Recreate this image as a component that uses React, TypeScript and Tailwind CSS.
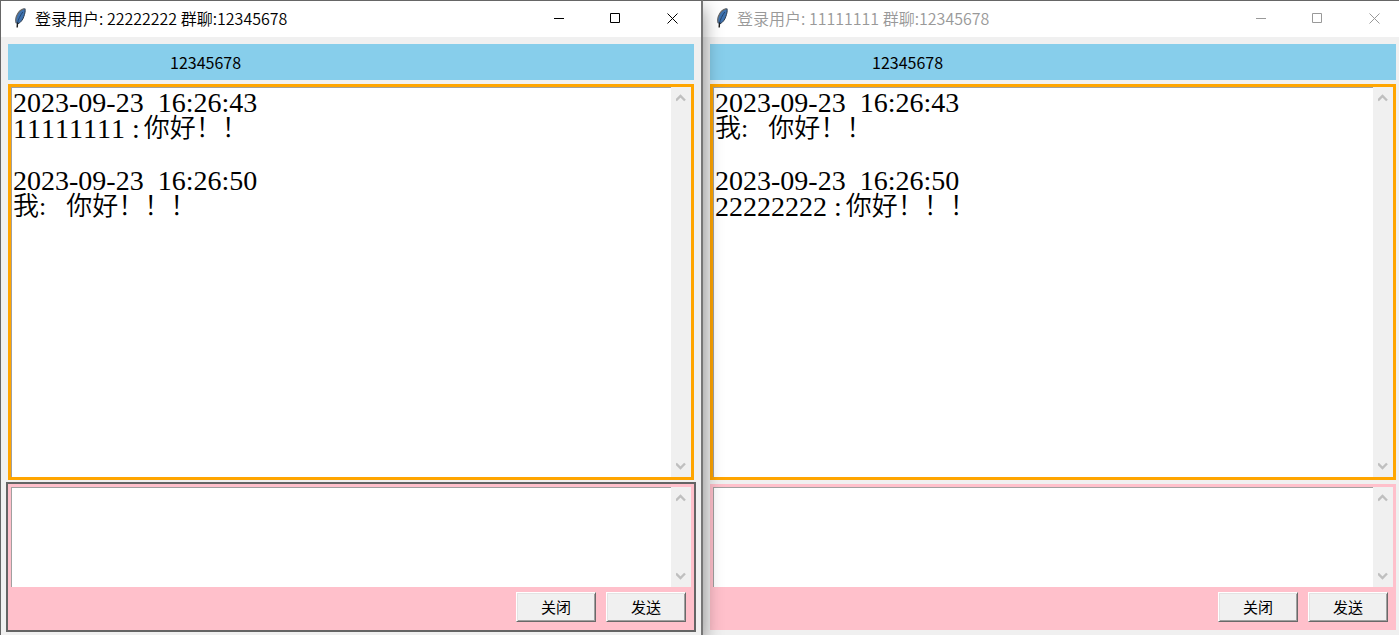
import clsx from "clsx";

interface Message {
  date: string;
  time: string;
  sender: string;
  text: string;
}

interface ChatWindowProps {
  user: string;
  group: string;
  messages: Message[];
  active?: boolean;
}

function FeatherIcon() {
  return (
    <svg viewBox="0 0 16 22" className="h-[22px] w-4" aria-hidden="true">
      <path
        d="M13 1.500C9.200 2 5.500 5.500 4 10c-.7 2.300-.7 4.500 0 6.200l1.600.9c3-1.300 5.200-4.300 6.300-7.600C13 6.500 13.600 4 13 1.500z"
        fill="#3f73b0"
      />
      <path
        d="M12.500 1.600C9 2.300 5.600 5.800 4.200 10c-.7 2.200-.7 4.300-.1 6"
        fill="none"
        stroke="#6b6a68"
        strokeWidth="1.2"
      />
      <path
        d="M13 1.600c.5 2.500-.1 5-1.200 8-1 3.200-3.100 6-6 7.300"
        fill="none"
        stroke="#2c3b4d"
        strokeWidth="1"
      />
      <path d="M10.800 5C8.200 8.500 6.200 12.500 5.600 16" fill="none" stroke="#24456e" strokeWidth="1" />
      <path d="M5.500 15.500L5.200 20.500" fill="none" stroke="#1f1f1f" strokeWidth="1.4" />
    </svg>
  );
}

function WindowControls() {
  const button = "flex w-[57px] items-center justify-center";
  return (
    <div className="flex self-stretch">
      <button aria-label="最小化" className={button}>
        <svg viewBox="0 0 11 11" className="size-[11px]" stroke="currentColor">
          <path d="M1 5.500h10" />
        </svg>
      </button>
      <button aria-label="最大化" className={button}>
        <svg viewBox="0 0 11 11" className="size-[11px]" stroke="currentColor" fill="none">
          <path d="M.5.5h9v9h-9z" />
        </svg>
      </button>
      <button aria-label="关闭窗口" className={button}>
        <svg viewBox="0 0 11 11" className="size-[11px]" stroke="currentColor">
          <path d="M.5.5l10 10M10.500.5l-10 10" />
        </svg>
      </button>
    </div>
  );
}

function ScrollBar() {
  const button = "flex size-5 items-center justify-center text-[#bfbfbf]";
  return (
    <div className="flex w-5 flex-col justify-between bg-[#f0f0f0] py-px">
      <button aria-label="向上滚动" className={button}>
        <svg viewBox="0 0 10 8" className="h-2 w-[10px]" fill="none" stroke="currentColor" strokeWidth="2.4">
          <path d="M0 6.500L4.500 2 9 6.500" />
        </svg>
      </button>
      <button aria-label="向下滚动" className={button}>
        <svg viewBox="0 0 10 8" className="h-2 w-[10px]" fill="none" stroke="currentColor" strokeWidth="2.4">
          <path d="M0 1.500L4.500 6 9 1.500" />
        </svg>
      </button>
    </div>
  );
}

function PushButton({ label }: { label: string }) {
  return (
    <button className="h-[30px] w-20 border border-t-white border-l-white border-r-[#696969] border-b-[#696969] bg-[#f0f0f0] text-[15px] leading-5 text-black shadow-[inset_1px_1px_0_#e3e3e3,inset_-1px_-1px_0_#a0a0a0]">
      {label}
    </button>
  );
}

function MessageRow({ message }: { message: Message }) {
  const mine = message.sender === "我";
  return (
    <li>
      <div className="flex gap-3.5 text-[28px] leading-[26px]">
        <span>{message.date}</span>
        <span>{message.time}</span>
      </div>
      <div className="flex text-[26px] leading-[26px]">
        {mine ? (
          <span className="mr-5">我:</span>
        ) : (
          <span className="mr-1 text-[28px]">{message.sender} :</span>
        )}
        <span>{message.text}</span>
      </div>
    </li>
  );
}

function ChatWindow({ user, group, messages, active }: ChatWindowProps) {
  return (
    <section
      className={clsx(
        "flex flex-1 flex-col border-t border-t-[#666666] bg-[#f0f0f0]",
        active
          ? "relative z-10 border-r-2 border-l border-r-[#777777] border-l-[#666666] shadow-[0_8px_18px_rgba(0,0,0,0.45)]"
          : "-mr-1",
      )}
    >
      <header
        className={clsx(
          "flex h-9 items-center bg-white pb-0.5 pl-[11px]",
          active ? "text-black" : "text-[#999999]",
        )}
      >
        <FeatherIcon />
        <h1 className="ml-[7px] flex-1 text-base leading-6 font-[350]">
          登录用户: {user} 群聊:{group}
        </h1>
        <WindowControls />
      </header>

      <div className="flex flex-1 flex-col gap-1 px-[7px] pt-[7px] pb-[5px]">
        <div className="h-9 bg-[#87ceeb] pl-[162px] text-base leading-9">{group}</div>

        <div className="flex flex-1 border-3 border-[#ffa500]">
          <ul className="flex flex-1 flex-col gap-[26px] border-t border-l border-[#a0a0a0] bg-white pt-[2px] pl-px font-['Liberation_Serif','Noto_Sans_CJK_SC',serif] font-[350] [font-kerning:none]">
            {messages.map((m) => (
              <MessageRow key={m.time} message={m} />
            ))}
          </ul>
          <ScrollBar />
        </div>

        <form
          className={clsx("bg-[#ffc0cb] p-[3px]", active && "ring-2 ring-[#646464]")}
          onSubmit={(e) => e.preventDefault()}
        >
          <div className="flex h-[100px]">
            <textarea
              aria-label="消息"
              className="flex-1 resize-none border-t border-l border-[#a0a0a0] bg-white p-[2px] text-[26px] leading-[26px] outline-none"
            />
            <ScrollBar />
          </div>
          <div className="flex justify-end gap-[10px] p-[5px]">
            <PushButton label="关闭" />
            <PushButton label="发送" />
          </div>
        </form>
      </div>
    </section>
  );
}

const leftMessages: Message[] = [
  { date: "2023-09-23", time: "16:26:43", sender: "11111111", text: "你好！！" },
  { date: "2023-09-23", time: "16:26:50", sender: "我", text: "你好！！！" },
];

const rightMessages: Message[] = [
  { date: "2023-09-23", time: "16:26:43", sender: "我", text: "你好！！" },
  { date: "2023-09-23", time: "16:26:50", sender: "22222222", text: "你好！！！" },
];

export default function App() {
  return (
    <main className="flex min-h-screen overflow-hidden font-['Noto_Sans_CJK_SC',sans-serif] text-black">
      <ChatWindow user="22222222" group="12345678" messages={leftMessages} active />
      <ChatWindow user="11111111" group="12345678" messages={rightMessages} />
    </main>
  );
}
